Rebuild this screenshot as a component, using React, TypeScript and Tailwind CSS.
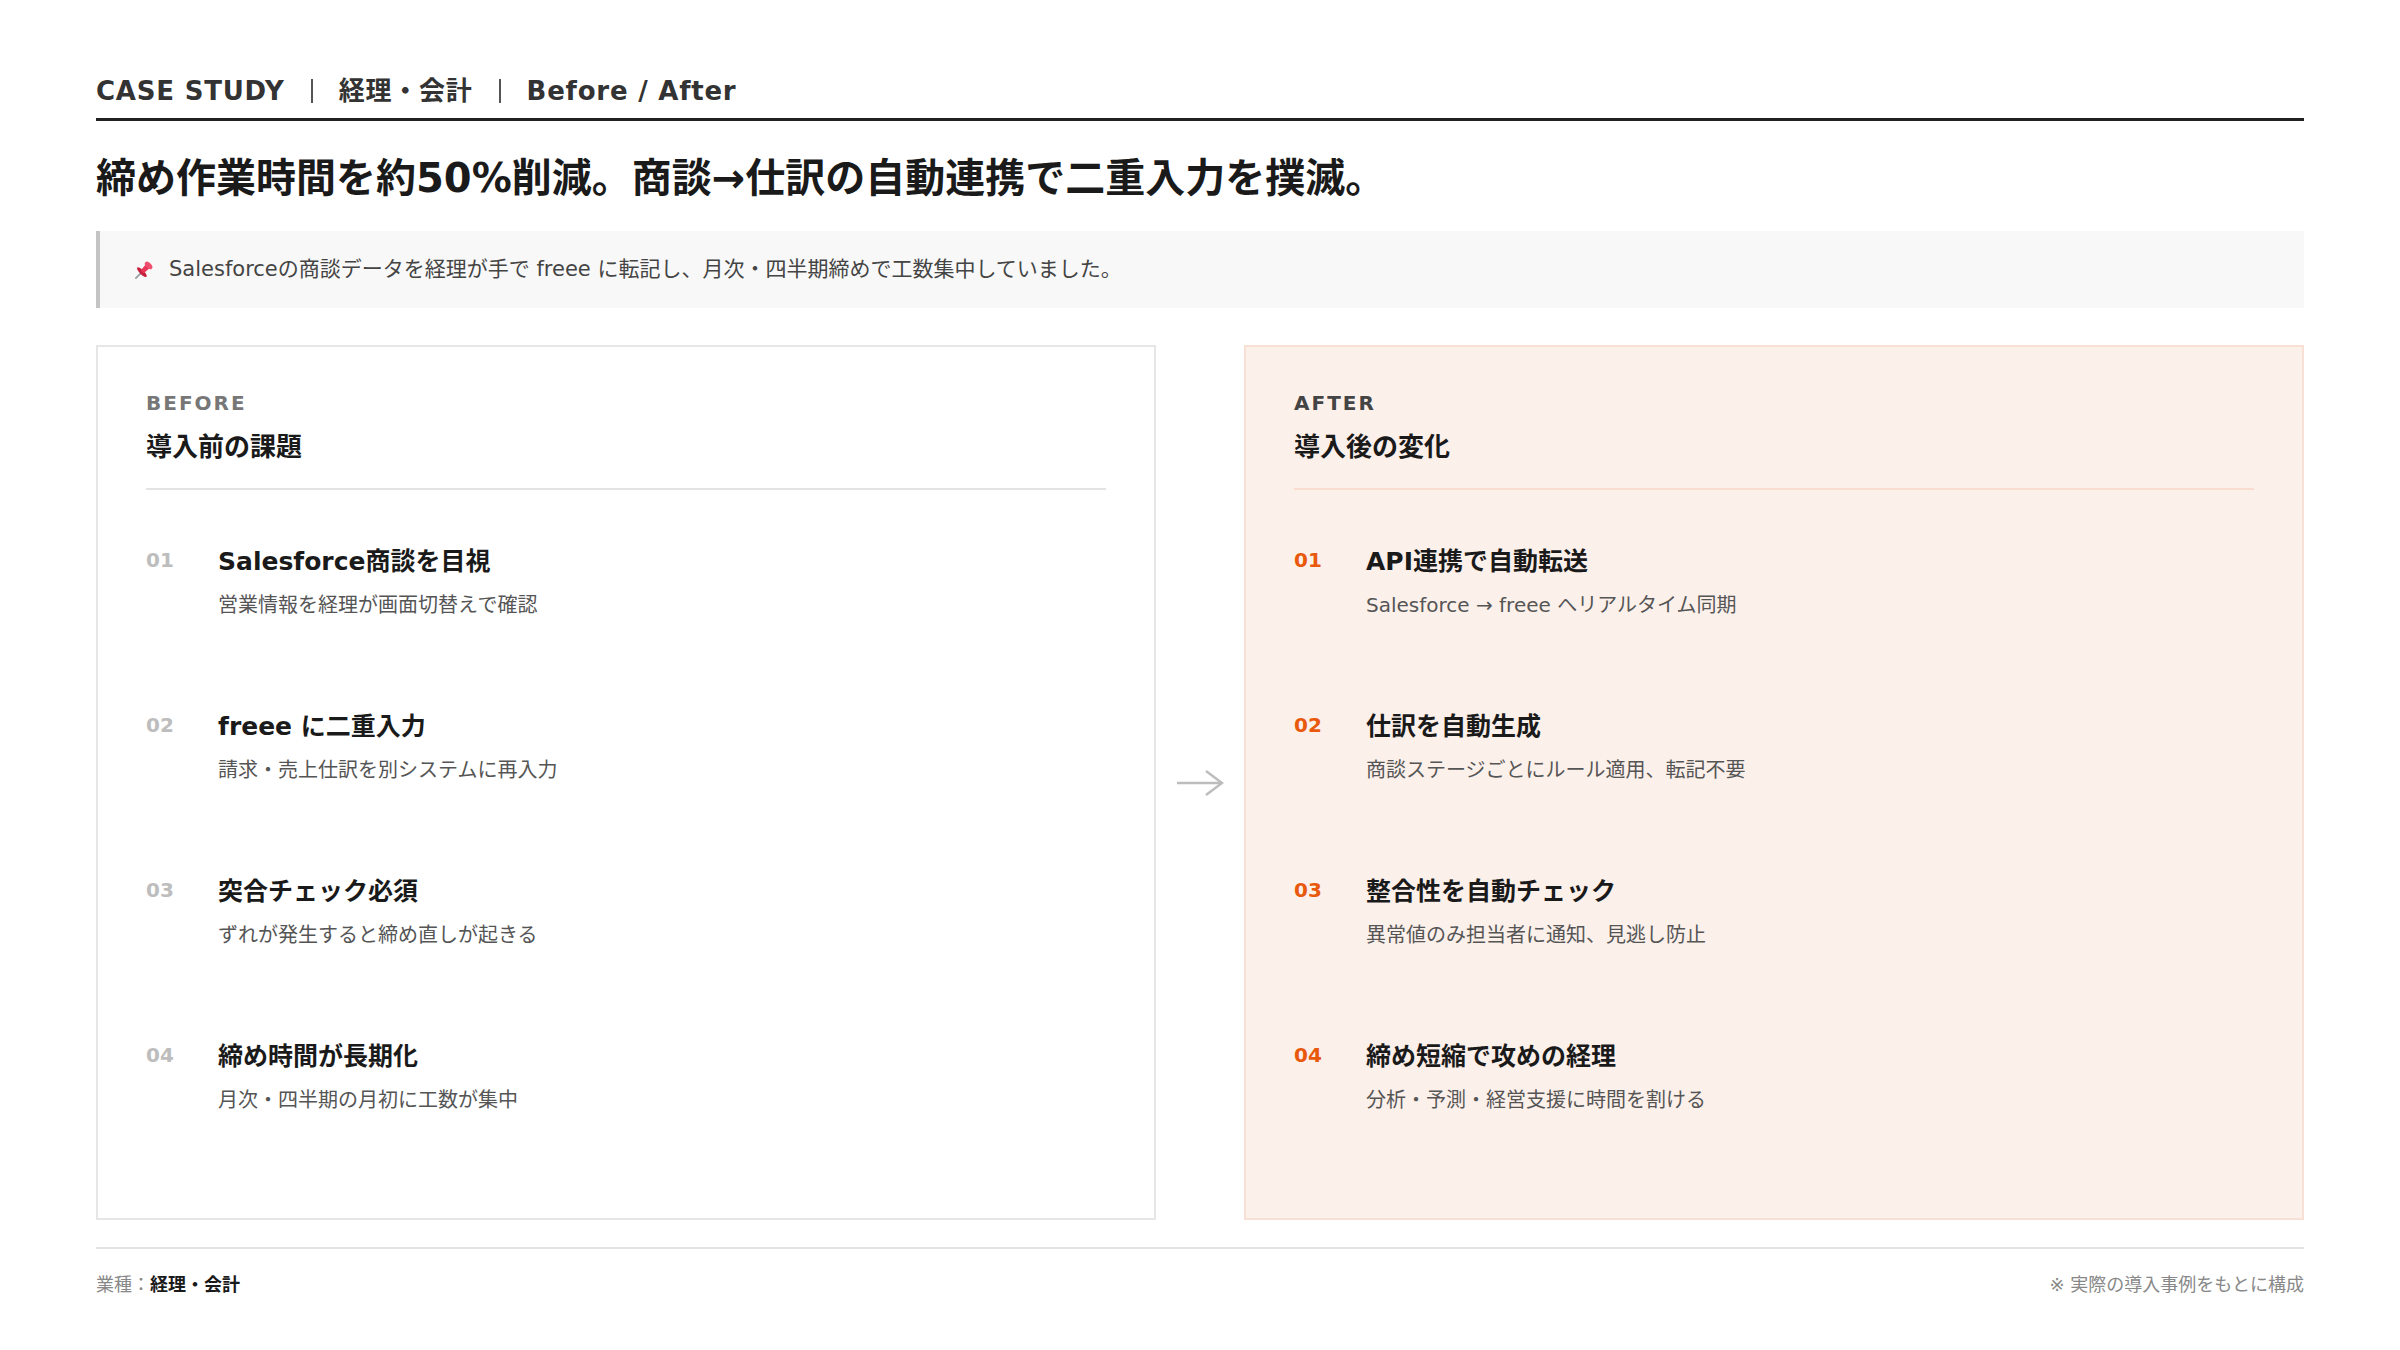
import React from 'react';

interface Item {
  no: string;
  title: string;
  desc: string;
}

const beforeItems: Item[] = [
  { no: '01', title: 'Salesforce商談を目視', desc: '営業情報を経理が画面切替えで確認' },
  { no: '02', title: 'freee に二重入力', desc: '請求・売上仕訳を別システムに再入力' },
  { no: '03', title: '突合チェック必須', desc: 'ずれが発生すると締め直しが起きる' },
  { no: '04', title: '締め時間が長期化', desc: '月次・四半期の月初に工数が集中' },
];

const afterItems: Item[] = [
  { no: '01', title: 'API連携で自動転送', desc: 'Salesforce → freee へリアルタイム同期' },
  { no: '02', title: '仕訳を自動生成', desc: '商談ステージごとにルール適用、転記不要' },
  { no: '03', title: '整合性を自動チェック', desc: '異常値のみ担当者に通知、見逃し防止' },
  { no: '04', title: '締め短縮で攻めの経理', desc: '分析・予測・経営支援に時間を割ける' },
];

function PinIcon() {
  return (
    <svg width="24" height="24" viewBox="0 0 24 24" className="shrink-0">
      <g transform="rotate(45 12 12)">
        <line x1="12" y1="15" x2="12" y2="23.5" stroke="#9a9ea4" strokeWidth="1.8" strokeLinecap="round" />
        <ellipse cx="12" cy="15" rx="6.5" ry="2.2" fill="#c8213f" />
        <path d="M9.2 6.5 H14.8 L14 14.5 H10 Z" fill="#e8385a" />
        <ellipse cx="12" cy="5.5" rx="4.6" ry="2.6" fill="#f0506e" />
      </g>
    </svg>
  );
}

function Separator() {
  return <span className="mx-[26px] h-[24px] w-[2px] bg-[#555]" />;
}

interface PanelProps {
  label: string;
  heading: string;
  items: Item[];
  after?: boolean;
}

function Panel({ label, heading, items, after }: PanelProps) {
  return (
    <div
      className={
        after
          ? 'border-2 border-[#f9e0d4] bg-[#fcf0eb] px-[48px] pt-[46px]'
          : 'border-2 border-[#e6e6e6] bg-white px-[48px] pt-[46px]'
      }
    >
      <div className={after ? 'border-b-2 border-[#f8dccf] pb-[24px]' : 'border-b-2 border-[#e3e3e3] pb-[24px]'}>
        <div
          className={
            after
              ? 'text-[20px] font-bold leading-[21px] tracking-[0.1em] text-[#444]'
              : 'text-[20px] font-bold leading-[21px] tracking-[0.1em] text-[#777]'
          }
        >
          {label}
        </div>
        <div className="mt-4 text-[26px] font-bold leading-[34px] text-[#1a1a1a]">{heading}</div>
      </div>

      <div className="mt-[55px] flex flex-col gap-[90px]">
        {items.map((item) => (
          <div key={item.no} className="flex">
            <div
              className={
                after
                  ? 'w-[72px] shrink-0 text-[20px] font-bold leading-[30px] text-[#e8590c]'
                  : 'w-[72px] shrink-0 text-[20px] font-bold leading-[30px] text-[#bdbdbd]'
              }
            >
              {item.no}
            </div>
            <div>
              <div className="text-[25px] font-bold leading-[34px] text-[#1a1a1a]">{item.title}</div>
              <div className="mt-[11px] text-[20px] leading-[30px] text-[#555]">{item.desc}</div>
            </div>
          </div>
        ))}
      </div>
    </div>
  );
}

export default function App() {
  return (
    <div className="h-[1350px] w-[2400px] bg-white px-[96px] pt-[74px] font-['DejaVu_Sans','Noto_Sans_CJK_JP',sans-serif] text-[#1a1a1a]">
      {/* header */}
      <div className="flex items-center border-b-[3px] border-[#222] pb-[10px] text-[26px] font-bold leading-[34px] tracking-[0.03em] text-[#333]">
        <span>CASE STUDY</span>
        <Separator />
        <span>経理・会計</span>
        <Separator />
        <span>Before / After</span>
      </div>

      <h1 className="mt-[29px] text-[40px] font-bold leading-[56px] text-[#1a1a1a]">
        締め作業時間を約50%削減。商談→仕訳の自動連携で二重入力を撲滅。
      </h1>

      <div className="mt-[25px] flex h-[77px] items-center gap-[13px] border-l-4 border-[#c4c4c4] bg-[#f8f8f8] pl-[32px] text-[21px] text-[#444]">
        <PinIcon />
        <span>Salesforceの商談データを経理が手で freee に転記し、月次・四半期締めで工数集中していました。</span>
      </div>

      <div className="mt-[37px] grid h-[875px] grid-cols-[1fr_88px_1fr]">
        <Panel label="BEFORE" heading="導入前の課題" items={beforeItems} />
        <div className="flex items-center justify-center">
          <svg width="48" height="26" viewBox="0 0 48 26" fill="none" stroke="#bdbdbd" strokeWidth="2.5">
            <path d="M1 13 H46" />
            <path d="M30 1 L46 13 L30 25" />
          </svg>
        </div>
        <Panel label="AFTER" heading="導入後の変化" items={afterItems} after />
      </div>

      <div className="mt-[27px] flex justify-between border-t-2 border-[#e3e3e3] pt-[22px] text-[18px] leading-[27px]">
        <div>
          <span className="text-[#888]">業種：</span>
          <span className="font-bold text-[#1a1a1a]">経理・会計</span>
        </div>
        <div className="text-[#888]">※ 実際の導入事例をもとに構成</div>
      </div>
    </div>
  );
}
